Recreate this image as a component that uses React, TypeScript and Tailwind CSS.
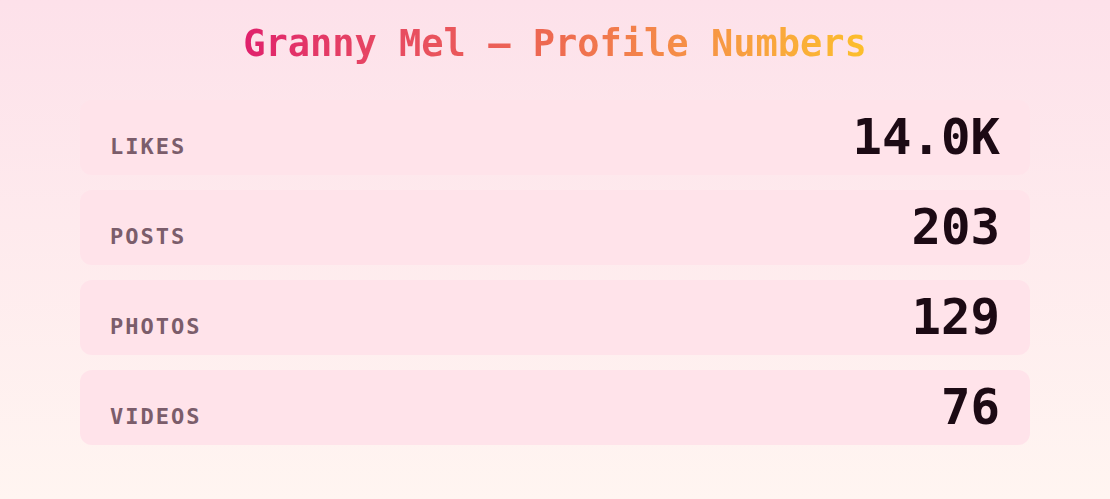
const stats = [
  { label: "Likes", value: "14.0K" },
  { label: "Posts", value: "203" },
  { label: "Photos", value: "129" },
  { label: "Videos", value: "76" },
];

export default function App() {
  return (
    <div className="min-h-[499px] w-full bg-gradient-to-b from-[#fde1ea] to-[#fff5f1] font-['DejaVu_Sans_Mono',monospace] px-[80px] pt-[22px] pb-[40px]">
      <h1 className="text-center text-[37px] leading-[44px] font-bold">
        <span className="bg-gradient-to-r from-[#e01f6c] via-[#ee6a50] to-[#fcbf2a] bg-clip-text text-transparent">
          Granny Mel — Profile Numbers
        </span>
      </h1>

      <div className="mt-[34px] flex flex-col gap-[15px]">
        {stats.map((s) => (
          <div
            key={s.label}
            className="h-[75px] rounded-[12px] bg-[#ffe3ea] px-[30px] flex items-baseline justify-between pt-[13px]"
          >
            <span className="text-[22px] font-bold uppercase tracking-[0.09em] text-[#7b5d6b]">
              {s.label}
            </span>
            <span className="text-[49px] leading-[50px] font-bold text-[#1c0a14]">
              {s.value}
            </span>
          </div>
        ))}
      </div>
    </div>
  );
}
